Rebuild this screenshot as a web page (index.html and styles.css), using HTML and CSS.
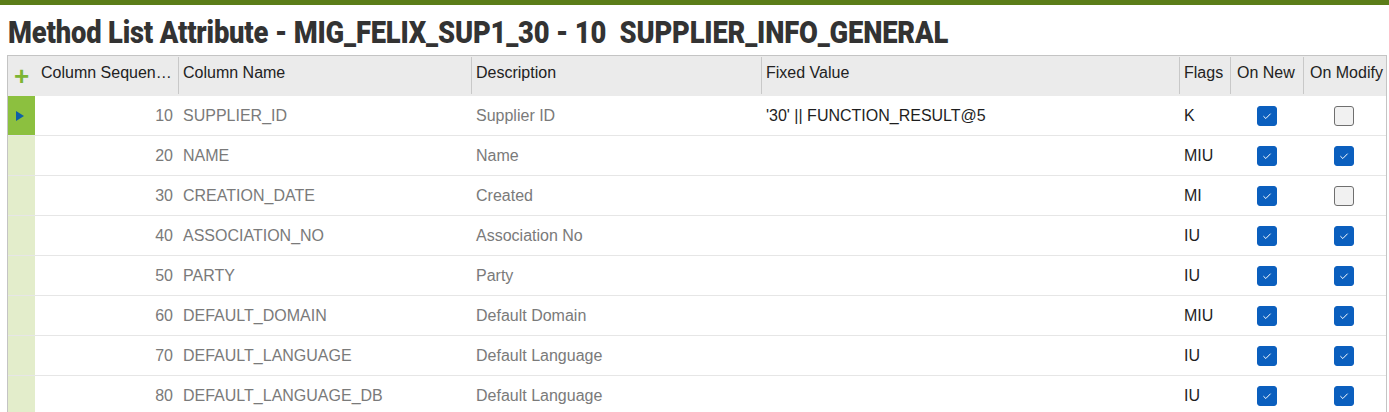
FILE: index.html
```html
<!DOCTYPE html>
<html>
<head>
<meta charset="utf-8">
<link rel="stylesheet" href="styles.css">
</head>
<body>
<div class="topbar"></div>
<h1 class="title"><span class="title-text">Method List Attribute - MIG_FELIX_SUP1_30 - 10&nbsp; SUPPLIER_INFO_GENERAL</span></h1>
<div class="grid">
  <div class="row head">
    <div class="sel"><span class="plus">+</span></div>
    <div class="c c-seq">Column Sequen…</div>
    <div class="c c-name">Column Name</div>
    <div class="c c-desc">Description</div>
    <div class="c c-fix">Fixed Value</div>
    <div class="c c-flag">Flags</div>
    <div class="c c-new">On New</div>
    <div class="c c-mod">On Modify</div>
  </div>
  <div class="row current">
    <div class="sel"><span class="arrow"></span></div>
    <div class="c c-seq num">10</div>
    <div class="c c-name">SUPPLIER_ID</div>
    <div class="c c-desc">Supplier ID</div>
    <div class="c c-fix dark">'30' || FUNCTION_RESULT@5</div>
    <div class="c c-flag dark">K</div>
    <div class="c c-new cb"><span class="box on"><svg viewBox="0 0 20 20"><path d="M6 10.2l2.7 2.6 5.3-5.4"/></svg></span></div>
    <div class="c c-mod cb"><span class="box"></span></div>
  </div>
  <div class="row">
    <div class="sel"></div>
    <div class="c c-seq num">20</div>
    <div class="c c-name">NAME</div>
    <div class="c c-desc">Name</div>
    <div class="c c-fix dark"></div>
    <div class="c c-flag dark">MIU</div>
    <div class="c c-new cb"><span class="box on"><svg viewBox="0 0 20 20"><path d="M6 10.2l2.7 2.6 5.3-5.4"/></svg></span></div>
    <div class="c c-mod cb"><span class="box on"><svg viewBox="0 0 20 20"><path d="M6 10.2l2.7 2.6 5.3-5.4"/></svg></span></div>
  </div>
  <div class="row">
    <div class="sel"></div>
    <div class="c c-seq num">30</div>
    <div class="c c-name">CREATION_DATE</div>
    <div class="c c-desc">Created</div>
    <div class="c c-fix dark"></div>
    <div class="c c-flag dark">MI</div>
    <div class="c c-new cb"><span class="box on"><svg viewBox="0 0 20 20"><path d="M6 10.2l2.7 2.6 5.3-5.4"/></svg></span></div>
    <div class="c c-mod cb"><span class="box"></span></div>
  </div>
  <div class="row">
    <div class="sel"></div>
    <div class="c c-seq num">40</div>
    <div class="c c-name">ASSOCIATION_NO</div>
    <div class="c c-desc">Association No</div>
    <div class="c c-fix dark"></div>
    <div class="c c-flag dark">IU</div>
    <div class="c c-new cb"><span class="box on"><svg viewBox="0 0 20 20"><path d="M6 10.2l2.7 2.6 5.3-5.4"/></svg></span></div>
    <div class="c c-mod cb"><span class="box on"><svg viewBox="0 0 20 20"><path d="M6 10.2l2.7 2.6 5.3-5.4"/></svg></span></div>
  </div>
  <div class="row">
    <div class="sel"></div>
    <div class="c c-seq num">50</div>
    <div class="c c-name">PARTY</div>
    <div class="c c-desc">Party</div>
    <div class="c c-fix dark"></div>
    <div class="c c-flag dark">IU</div>
    <div class="c c-new cb"><span class="box on"><svg viewBox="0 0 20 20"><path d="M6 10.2l2.7 2.6 5.3-5.4"/></svg></span></div>
    <div class="c c-mod cb"><span class="box on"><svg viewBox="0 0 20 20"><path d="M6 10.2l2.7 2.6 5.3-5.4"/></svg></span></div>
  </div>
  <div class="row">
    <div class="sel"></div>
    <div class="c c-seq num">60</div>
    <div class="c c-name">DEFAULT_DOMAIN</div>
    <div class="c c-desc">Default Domain</div>
    <div class="c c-fix dark"></div>
    <div class="c c-flag dark">MIU</div>
    <div class="c c-new cb"><span class="box on"><svg viewBox="0 0 20 20"><path d="M6 10.2l2.7 2.6 5.3-5.4"/></svg></span></div>
    <div class="c c-mod cb"><span class="box on"><svg viewBox="0 0 20 20"><path d="M6 10.2l2.7 2.6 5.3-5.4"/></svg></span></div>
  </div>
  <div class="row">
    <div class="sel"></div>
    <div class="c c-seq num">70</div>
    <div class="c c-name">DEFAULT_LANGUAGE</div>
    <div class="c c-desc">Default Language</div>
    <div class="c c-fix dark"></div>
    <div class="c c-flag dark">IU</div>
    <div class="c c-new cb"><span class="box on"><svg viewBox="0 0 20 20"><path d="M6 10.2l2.7 2.6 5.3-5.4"/></svg></span></div>
    <div class="c c-mod cb"><span class="box on"><svg viewBox="0 0 20 20"><path d="M6 10.2l2.7 2.6 5.3-5.4"/></svg></span></div>
  </div>
  <div class="row">
    <div class="sel"></div>
    <div class="c c-seq num">80</div>
    <div class="c c-name">DEFAULT_LANGUAGE_DB</div>
    <div class="c c-desc">Default Language</div>
    <div class="c c-fix dark"></div>
    <div class="c c-flag dark">IU</div>
    <div class="c c-new cb"><span class="box on"><svg viewBox="0 0 20 20"><path d="M6 10.2l2.7 2.6 5.3-5.4"/></svg></span></div>
    <div class="c c-mod cb"><span class="box on"><svg viewBox="0 0 20 20"><path d="M6 10.2l2.7 2.6 5.3-5.4"/></svg></span></div>
  </div>
</div>
</body>
</html>
```
FILE: styles.css
```css
html, body {
  margin: 0;
  padding: 0;
  background: #fff;
  overflow: hidden;
}
body {
  font-family: "Liberation Sans", Arial, sans-serif;
  font-size: 16px;
}
.topbar {
  height: 5px;
  background: #5b7d19;
}
.title {
  margin: 0;
  padding: 11px 0 0 8px;
  height: 39px;
  box-sizing: content-box;
  font-family: Roboto, "DejaVu Sans", sans-serif;
  font-weight: 900;
  font-size: 31px;
  line-height: 34px;
  color: #333;
  white-space: nowrap;
}
.title-text {
  display: inline-block;
  transform: scaleX(0.882);
  transform-origin: left center;
  letter-spacing: -0.2px;
}
.grid {
  margin-left: 7px;
  width: 1378px;
  border-left: 1px solid #c4c4c4;
  border-right: 1px solid #c4c4c4;
  border-top: 1px solid #c4c4c4;
}
.row {
  display: grid;
  grid-template-columns: 27px 143px 293px 290px 418px 51px 73px 82px;
  height: 40px;
  border-bottom: 1px solid #e6e6e6;
  box-sizing: border-box;
}
.row.head {
  background: #ebebeb;
  border-bottom: none;
  height: 40px;
}
.c {
  display: flex;
  align-items: center;
  padding-left: 5px;
  color: #7a7a7a;
  white-space: nowrap;
  overflow: hidden;
}
.head .c {
  color: #222;
  align-items: flex-start;
  padding-top: 7px;
  border-left: 1px solid #c8c8c8;
  margin: 1px 0 2px;
  padding-left: 4px;
}
.head .c.c-seq {
  border-left: none;
  padding-left: 6px;
}
.head .c.c-new, .head .c.c-mod {
  padding-left: 6px;
}
.c.num {
  justify-content: flex-end;
  padding-right: 5px;
  padding-left: 0;
}
.c.dark {
  color: #1e1e1e;
}
.c.cb {
  justify-content: center;
  padding-left: 0;
}
.sel {
  background: #e3edcb;
  display: flex;
  align-items: center;
  justify-content: center;
}
.head .sel {
  background: #ebebeb;
  align-items: flex-start;
}
.current .sel {
  background: #8cc03f;
}
.plus {
  color: #7cb534;
  font-size: 26px;
  font-weight: bold;
  line-height: 26px;
  margin-top: 7px;
}
.arrow {
  width: 0;
  height: 0;
  border-top: 5px solid transparent;
  border-bottom: 5px solid transparent;
  border-left: 8px solid #0e5fa8;
  margin-left: -4px;
}
.box {
  width: 18px;
  height: 18px;
  border: 1px solid #6f6f6f;
  border-radius: 3px;
  background: #f1f1f1;
  display: block;
}
.box.on {
  background: #0b5fbe;
  border-color: #0b5fbe;
}
.box svg {
  width: 18px;
  height: 18px;
  display: block;
}
.box svg path {
  fill: none;
  stroke: #fff;
  stroke-width: 1.1;
}
```
